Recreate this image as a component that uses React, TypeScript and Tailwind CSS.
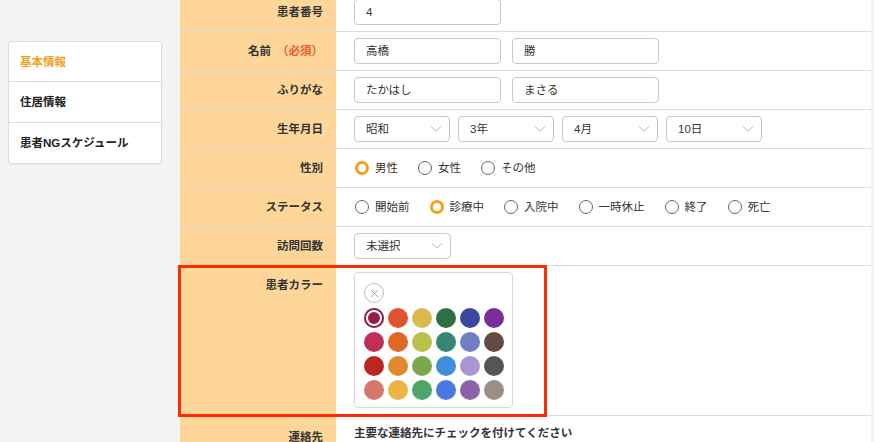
import { ChevronDown, X } from 'lucide-react'

const font = { fontFamily: '"Liberation Sans", "Noto Sans CJK JP", sans-serif' }

const colors = [
  '#8e2048', '#e0532f', '#dbb94f', '#2e7043', '#3a48a0', '#7a2d99',
  '#c22e56', '#de6828', '#b9c04c', '#368778', '#6f7fc2', '#654b3f',
  '#b82820', '#de8a31', '#7ba84b', '#3f8fd8', '#a796d2', '#555555',
  '#d4776c', '#ebb445', '#4fa46b', '#4a78e0', '#8a63a4', '#9b8f85',
]

function Row({
  label,
  children,
  tall,
  labelTop,
}: {
  label: React.ReactNode
  children: React.ReactNode
  tall?: boolean
  labelTop?: string
}) {
  return (
    <div
      className={`grid grid-cols-[156px_1fr] border-b border-[#dcdcdc] ${
        tall ? '' : 'h-[39px]'
      }`}
    >
      <div
        className={`bg-[#ffd699] pr-[13px] text-right font-bold text-[#333] ${
          labelTop ? labelTop : 'flex items-center justify-end'
        }`}
      >
        {label}
      </div>
      <div className={`pl-[18px] ${tall ? '' : 'flex items-center'}`}>{children}</div>
    </div>
  )
}

function TextInput({ value }: { value: string }) {
  return (
    <div className="flex h-[26px] w-[147px] items-center rounded-[4px] border border-[#c8c8c8] px-[11px] text-[#333]">
      {value}
    </div>
  )
}

function Select({ value, w = 'w-[96px]' }: { value: string; w?: string }) {
  return (
    <div
      className={`flex h-[26px] ${w} items-center justify-between rounded-[4px] border border-[#c8c8c8] pl-[11px] pr-[4px] text-[#333]`}
    >
      <span>{value}</span>
      <ChevronDown size={18} strokeWidth={1.1} className="text-[#a0a0a0]" />
    </div>
  )
}

function Radio({ label, checked }: { label: string; checked?: boolean }) {
  return (
    <div className="flex items-center gap-[6px] text-[#333]">
      <span
        className={`box-border h-[14px] w-[14px] rounded-full bg-white ${
          checked ? 'border-[3px] border-[#f5a01a]' : 'border-[1.5px] border-[#666]'
        }`}
      />
      <span>{label}</span>
    </div>
  )
}

export default function App() {
  return (
    <div
      className="flex h-[442px] w-[874px] overflow-hidden bg-[#f4f4f4] text-[11.5px] leading-[14px]"
      style={font}
    >
      {/* sidebar */}
      <aside className="w-[180px] shrink-0 pl-[8px] pt-[41px]">
        <div className="w-[154px] rounded-[3px] border border-[#dcdcdc] bg-white shadow-[0_1px_2px_rgba(0,0,0,0.06)]">
          <div className="flex h-[40px] items-center border-b border-[#dcdcdc] pl-[11px] font-bold text-[#f5a025]">
            基本情報
          </div>
          <div className="flex h-[41px] items-center border-b border-[#dcdcdc] pl-[11px] font-bold text-[#222]">
            住居情報
          </div>
          <div className="flex h-[40px] items-center pl-[11px] font-bold text-[#222]">
            患者NGスケジュール
          </div>
        </div>
      </aside>

      {/* form */}
      <main className="-mt-[7px] w-[691px] shrink-0 bg-white">
        <Row label="患者番号">
          <TextInput value="4" />
        </Row>
        <Row
          label={
            <>
              名前 <span className="ml-[6px] text-[#f05a28]">（必須）</span>
            </>
          }
        >
          <div className="flex gap-[11px]">
            <TextInput value="高橋" />
            <TextInput value="勝" />
          </div>
        </Row>
        <Row label="ふりがな">
          <div className="flex gap-[11px]">
            <TextInput value="たかはし" />
            <TextInput value="まさる" />
          </div>
        </Row>
        <Row label="生年月日">
          <div className="flex gap-[8px]">
            <Select value="昭和" />
            <Select value="3年" />
            <Select value="4月" />
            <Select value="10日" />
          </div>
        </Row>
        <Row label="性別">
          <div className="flex gap-[20px] pl-[1px]">
            <Radio label="男性" checked />
            <Radio label="女性" />
            <Radio label="その他" />
          </div>
        </Row>
        <Row label="ステータス">
          <div className="flex gap-[20px] pl-[1px]">
            <Radio label="開始前" />
            <Radio label="診療中" checked />
            <Radio label="入院中" />
            <Radio label="一時休止" />
            <Radio label="終了" />
            <Radio label="死亡" />
          </div>
        </Row>
        <Row label="訪問回数">
          <Select value="未選択" w="w-[97px]" />
        </Row>

        {/* colour row */}
        <div className="relative">
          <Row label="患者カラー" tall labelTop="pt-[12px]">
            <div className="h-[149px] pt-[6px]">
              <div className="h-[136px] w-[159px] rounded-[4px] border border-[#d9d9d9] px-[9px] pt-[10px]">
                <div className="flex h-[20px] w-[20px] items-center justify-center rounded-full border border-[#bdbdbd]">
                  <X size={13} strokeWidth={1.4} className="text-[#888]" />
                </div>
                <div className="mt-[5px] grid grid-cols-[repeat(6,20px)] gap-[4px]">
                  {colors.map((c, i) => (
                    <span
                      key={c}
                      className={`h-[20px] w-[20px] rounded-full ${
                        i === 0 ? 'shadow-[inset_0_0_0_2px_#8e2048,inset_0_0_0_4px_#fff]' : ''
                      }`}
                      style={{ backgroundColor: c }}
                    />
                  ))}
                </div>
              </div>
            </div>
          </Row>
          <div className="pointer-events-none absolute -left-[2px] -top-[1px] h-[152px] w-[369px] border-[3px] border-[#ff2a00]" />
        </div>

        <div className="grid grid-cols-[156px_1fr]">
          <div className="h-[40px] bg-[#ffd699] pr-[13px] pt-[14px] text-right font-bold text-[#333]">
            連絡先
          </div>
          <div className="pl-[18px] pt-[10px] font-bold text-[#333]">
            主要な連絡先にチェックを付けてください
          </div>
        </div>
      </main>
    </div>
  )
}
